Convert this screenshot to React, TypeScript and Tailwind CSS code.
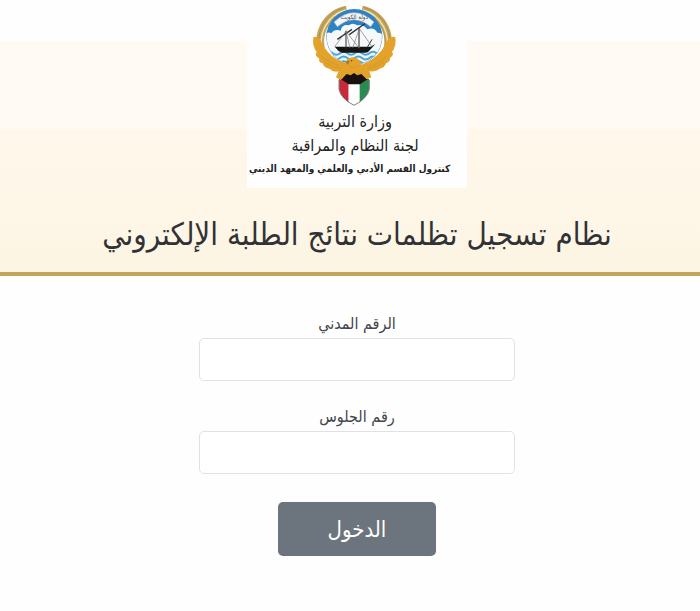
import type { InputHTMLAttributes } from "react";

type FieldProps = InputHTMLAttributes<HTMLInputElement> & {
  id: string;
  label: string;
};

function Emblem() {
  return (
    <svg viewBox="0 0 330 330" className="h-[110px] w-[110px]" aria-hidden="true">
      <defs>
        <clipPath id="disc">
          <circle cx="163" cy="111" r="83" />
        </clipPath>
        <clipPath id="shield">
          <path d="M117 236H208V268Q202 296 162 316Q122 296 117 268Z" />
        </clipPath>
      </defs>

      {/* wing tips curling round the disc */}
      <g fill="none">
        <path d="M72 172A98 98 0 0 1 140 28" stroke="#c9a552" strokeWidth="22" />
        <path d="M252 172A98 98 0 0 0 186 28" stroke="#c9a552" strokeWidth="22" />
        <path d="M62 160A106 106 0 0 1 134 22" stroke="#8f8468" strokeWidth="2" />
        <path d="M264 160A106 106 0 0 0 192 22" stroke="#8f8468" strokeWidth="2" />
        <path d="M70 160A99 99 0 0 1 138 30" stroke="#f0e3bf" strokeWidth="4" />
        <path d="M256 160A99 99 0 0 0 188 30" stroke="#f0e3bf" strokeWidth="4" />
        <path d="M76 156A92 92 0 0 1 140 36" stroke="#a98a45" strokeWidth="2" />
        <path d="M250 156A92 92 0 0 0 186 36" stroke="#a98a45" strokeWidth="2" />
      </g>

      {/* sky, clouds and sea */}
      <circle cx="163" cy="111" r="84" fill="#2a83c6" />
      <g clipPath="url(#disc)">
        <path
          d="M70 160V112Q82 92 94 100Q104 86 122 92Q126 72 146 76Q158 66 172 76Q190 72 202 88Q222 80 232 98Q244 98 250 106V160Z"
          fill="#f6f8fa"
        />
        <path d="M70 152H250V210H70Z" fill="#e9f5fb" />
        <g fill="none" stroke="#4ba3d6" strokeWidth="6">
          <path d="M76 160q11-9 22 0t22 0t22 0t22 0t22 0t22 0t22 0t22 0" />
          <path d="M76 174q11-9 22 0t22 0t22 0t22 0t22 0t22 0t22 0t22 0" />
          <path d="M76 188q11-9 22 0t22 0t22 0t22 0t22 0t22 0t22 0t22 0" />
        </g>
        <path d="M104 140H212L226 132L208 152Q204 158 196 158H126Q114 154 104 140Z" fill="#151515" />
        <g fill="none" stroke="#333" strokeWidth="3">
          <path d="M138 146V92M177 146V84M202 142L216 118" />
          <path d="M112 118L156 88M148 104L210 60" strokeWidth="4" />
        </g>
        <path
          d="M104 140L138 94L150 144M138 94L177 144L178 86L216 140M158 144L178 86"
          fill="none"
          stroke="#777"
          strokeWidth="2"
        />
      </g>
      <path d="M102 66Q162 10 222 66L212 80Q162 38 112 80Z" fill="#f3f5f6" stroke="#a9b4bb" strokeWidth="2" />
      <text
        x="163"
        y="58"
        textAnchor="middle"
        fontSize="18"
        fill="#39424a"
        className="font-['DejaVu_Sans_Condensed','DejaVu_Sans',sans-serif]"
      >
        دولة الكويت
      </text>

      {/* shield in the flag's colours */}
      <g clipPath="url(#shield)">
        <path d="M110 220H146V320H110Z" fill="#c9283b" />
        <path d="M146 220H179V320H146Z" fill="#fdfdfd" />
        <path d="M179 220H214V320H179Z" fill="#2b8a50" />
        <path d="M117 234H208L180 253H146Z" fill="#17120f" />
      </g>
      <path d="M124 240L138 216H188L202 240Z" fill="#17120f" />
      <path
        d="M117 240V268Q122 296 162 316Q202 296 208 268V240"
        fill="none"
        stroke="#808380"
        strokeWidth="3"
      />

      {/* falcon */}
      <path
        d="M40 112Q50 106 60 118L72 140Q92 172 124 184L140 190Q138 178 148 175Q162 168 174 178Q184 184 184 194Q220 182 246 150L264 118Q274 106 286 112Q290 138 276 156Q284 164 270 174Q272 184 258 190Q254 204 238 206Q228 216 208 214L214 232L200 238L184 222L172 226L162 219L152 226L140 222L122 240L108 232L116 214Q100 218 88 206Q72 204 68 190Q54 186 58 176Q42 166 50 156Q36 138 40 112Z"
        fill="#e3a32b"
      />
      <path d="M140 192Q136 184 142 180L150 184Q146 188 146 194Z" fill="#b67c1f" />
      <circle cx="155" cy="182" r="2" fill="#3b2c12" />
      <path
        d="M62 166Q84 188 118 198M74 186Q94 202 122 206M262 166Q240 190 206 200M250 186Q230 202 202 208M150 200Q162 208 176 198"
        fill="none"
        stroke="#cf9226"
        strokeWidth="2"
      />
    </svg>
  );
}

function Field({ id, label, ...props }: FieldProps) {
  return (
    <div className="flex w-full flex-col">
      <label htmlFor={id} className="text-center text-base leading-7 text-[#43474b]">
        {label}
      </label>
      <input
        id={id}
        name={id}
        className="h-[43px] w-full rounded-[5px] border border-[#dee2e6] bg-white px-3 text-center text-base outline-none focus:border-[#6c757d]"
        {...props}
      />
    </div>
  );
}

export default function App() {
  return (
    <div
      dir="rtl"
      lang="ar"
      className="min-h-screen bg-[#fefefe] font-['DejaVu_Sans_Condensed','DejaVu_Sans',sans-serif] text-[#303236]"
    >
      <header className="flex flex-col items-center border-b-4 border-[#c2a45a] bg-[linear-gradient(#fefefe_15%,#fffaf4_15%,#fffaf3_47%,#fff7eb_48%,#fdf5e3)] pl-3.5">
        <div className="flex w-[220px] flex-col items-center bg-[#fefefe] pr-1 pb-2 text-[#222]">
          <Emblem />
          <p className="text-base leading-6">وزارة التربية</p>
          <p className="text-base leading-6">لجنة النظام والمراقبة</p>
          <p className="self-end pl-0.5 text-[10px] leading-[22px] font-bold whitespace-nowrap">
            كنترول القسم الأدبي والعلمي والمعهد الديني
          </p>
        </div>
        <h1 className="pt-[26px] pb-[18px] text-center text-[31px] leading-10">
          نظام تسجيل تظلمات نتائج الطلبة الإلكتروني
        </h1>
      </header>

      <main className="pt-[34px] pl-3.5">
        <form
          className="mx-auto flex w-full max-w-[316px] flex-col items-center gap-[22px]"
          onSubmit={(event) => event.preventDefault()}
        >
          <Field id="civil-id" label="الرقم المدني" inputMode="numeric" />
          <Field id="seat-number" label="رقم الجلوس" inputMode="numeric" />
          <button
            type="submit"
            className="mt-1.5 h-[54px] w-1/2 rounded-[5px] bg-[#6c757d] text-[22px] text-white hover:bg-[#5c636a]"
          >
            الدخول
          </button>
        </form>
      </main>
    </div>
  );
}
